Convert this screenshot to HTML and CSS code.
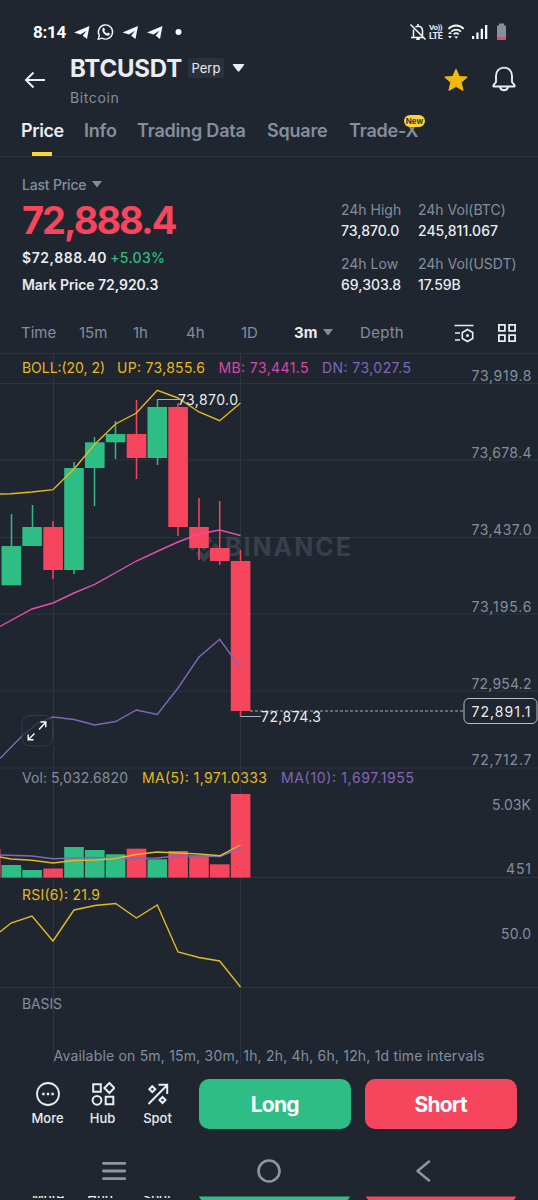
FILE: index.html
```html
<!DOCTYPE html>
<html lang="en">

<head>
    <meta charset="UTF-8">
    <meta name="viewport" content="width=device-width, initial-scale=1.0">
    <title>BTCUSDT Perp</title>
    <link rel="stylesheet" href="styles.css">
</head>

<body>
    <div class="status-bar">
        <span class="clock">8:14</span>
        <svg class="status-left" width="112" height="18" viewBox="0 0 112 18" fill="#f4f6f8">
            <path id="plane" d="M1 9.6 16.5 3 14 16l-4.3-3.2 3.8-5-6 3.7z" />
            <path d="M25.3 16.3 26.3 12.5A7.1 7.1 0 1 1 29 15.2Z" fill="none" stroke="#f4f6f8" stroke-width="1.4" />
            <path d="M29.5 5.4c.8-.9 1.6-.7 2 .2l.5 1.3-.8 1.2c.7 1.3 1.7 2 2.8 2.5l1-1 1.9 1c.4.8-.7 2.1-2 2.1-2.9-.4-6.3-3.6-5.4-7.3z" />
            <use href="#plane" x="48.5" />
            <use href="#plane" x="73" />
            <circle cx="105.500" cy="9" r="3" />
        </svg>
        <div class="status-right">
            <svg width="18" height="18" viewBox="0 0 18 18" fill="none" stroke="#f4f6f8" stroke-width="1.5">
                <path d="M2 14.5h13M4.500 14V6.500M13.500 12.500V8c0-3-1.800-4.800-4.500-4.800-1 0-1.800.2-2.500.7M9 1v2M1.500 1.500l15 15" />
                <path d="M7.300 16h3.400" stroke-width="2" />
            </svg>
            <div class="volte"><span class="vo">Vo))</span><span>LTE</span></div>
            <svg width="18" height="18" viewBox="0 0 18 18" fill="none" stroke="#f4f6f8" stroke-width="1.8">
                <path d="M1.500 5.800c4.300-4.400 10.900-4.400 15.200 0M4.300 8.700c2.800-2.700 7-2.700 9.700 0M6.700 11.300c1.500-1.400 3.500-1.400 5 0" />
                <path d="m9.200 15.800 2-2.300H7.200z" fill="#f4f6f8" stroke="none" />
                <path d="M3 8.500 1 11h4zM3 15.500 1 13h4z" fill="#f4f6f8" stroke="none" />
            </svg>
            <svg class="signal" width="16" height="18" viewBox="0 0 16 18" fill="#f4f6f8">
                <path d="M0 13h2.200v3H0zM4.300 9.500h2.300V16H4.300zM8.700 5.800H11V16H8.700zM13 2h2.300v14H13z" />
            </svg>
            <svg class="battery" width="9" height="18" viewBox="0 0 9 18">
                <path d="M2 .5h5V2l2 1v13q0 1-1 1H1q-1 0-1-1V3l2-1z" fill="#8a8f98" />
                <path d="M0 14h9v2q0 1-1 1H1q-1 0-1-1z" fill="#f6465d" />
            </svg>
        </div>
    </div>

    <header class="header">
        <svg class="back" width="22" height="20" viewBox="0 0 22 20" fill="none" stroke="#eaecef" stroke-width="2">
            <path d="M21 10H2M9.500 2.500 2 10l7.500 7.500" />
        </svg>
        <div class="pair">
            <div class="pair-name">
                <h1>BTCUSDT</h1>
                <span class="perp">Perp</span>
                <svg width="13" height="8" viewBox="0 0 13 8" fill="#eaecef"><path d="M1.500 0h10q1.200 0 .6 1L7.300 7.300q-.8.800-1.600 0L.9 1Q.3 0 1.500 0z" /></svg>
            </div>
            <div class="coin">Bitcoin</div>
        </div>
        <svg class="star" width="24" height="24" viewBox="0 0 24 24" fill="#f0b90b" stroke="#f0b90b" stroke-width="1.2" stroke-linejoin="round">
            <path d="m12 1.500 3.100 7 7.900.6-6 5.100 1.900 8L12 18.300l-6.900 3.900L7 14.200 1 9.100l7.900-.6z" />
        </svg>
        <svg class="bell" width="24" height="26" viewBox="0 0 24 26" fill="none" stroke="#eaecef" stroke-width="1.9">
            <path d="M1.500 20.500v-1.300L4 16V10c0-5 3.400-8.400 8-8.400S20 5 20 10v6l2.500 3.200v1.300z" stroke-linejoin="round" />
            <path d="M8 21c.4 2 2 3.200 4 3.200s3.600-1.200 4-3.200" />
        </svg>
    </header>

    <nav class="tabs">
        <a class="tab active">Price</a>
        <a class="tab info">Info</a>
        <a class="tab data">Trading Data</a>
        <a class="tab square">Square</a>
        <a class="tab tradex">Trade-X<span class="new">New</span></a>
    </nav>

    <section class="ticker">
        <div class="ticker-left">
            <div class="last-label">Last Price
                <svg width="10" height="7" viewBox="0 0 10 7" fill="#848e9c"><path d="M0 0h10L5 6.500z" /></svg>
            </div>
            <div class="last-price">72,888.4</div>
            <div class="usd">$72,888.40 <span class="change">+5.03%</span></div>
            <div class="mark">Mark Price <span>72,920.3</span></div>
        </div>
        <div class="stats">
            <div class="stat"><span class="k">24h High</span><span class="v">73,870.0</span></div>
            <div class="stat"><span class="k">24h Vol(BTC)</span><span class="v">245,811.067</span></div>
            <div class="stat"><span class="k">24h Low</span><span class="v">69,303.8</span></div>
            <div class="stat"><span class="k">24h Vol(USDT)</span><span class="v">17.59B</span></div>
        </div>
    </section>

    <div class="intervals">
        <span class="time">Time</span>
        <span class="m15">15m</span>
        <span class="h1">1h</span>
        <span class="h4">4h</span>
        <span class="d1">1D</span>
        <span class="m3">3m</span>
        <svg class="caret" width="10" height="7" viewBox="0 0 10 7" fill="#848e9c"><path d="M0 0h10L5 6.500z" /></svg>
        <span class="depth">Depth</span>
        <svg class="settings" width="20" height="20" viewBox="0 0 20 20" fill="none" stroke="#eaecef" stroke-width="1.6">
            <path d="M.5 2.500h19M1 10h5M1 17h5M13.500 6.500l5.200 3v6l-5.200 3-5.200-3v-6z" />
            <circle cx="13.500" cy="12.500" r="1.500" fill="#eaecef" stroke="none" />
        </svg>
        <svg class="layout" width="20" height="20" viewBox="0 0 20 20" fill="none" stroke="#eaecef" stroke-width="1.8">
            <path d="M1.900 1.900h6v6h-6zM12.100 1.900h6v6h-6zM1.900 12.100h6v6h-6zM12.100 12.100h6v6h-6z" />
        </svg>
    </div>

    <svg class="chart" width="538" height="711" viewBox="0 353 538 711">
        <g class="grid">
            <path d="M0 353.500H538M0 383.500H538M0 460H538M0 537.500H538M0 614H538M0 691H538M0 768H538M0 877.500H538M0 987.500H538" />
            <path d="M53.500 353V1064M240.500 353V1064" />
        </g>

        <!-- watermark -->
        <g class="watermark">
            <path d="m204 532 8.500 8.500-3.800 3.800-4.700-4.700-4.700 4.700-3.800-3.800zM192.500 543l4 4-4 4-4-4zM204 543l4 4-4 4-4-4zM215.500 543l4 4-4 4-4-4zM204 562l-8.500-8.500 3.800-3.800 4.700 4.700 4.700-4.700 3.800 3.800z" />
            <text x="225" y="556" textLength="126">BINANCE</text>
        </g>

        <!-- candles -->
        <g class="up">
            <path d="M11.500 514V550M32.500 505V530M74 462V574M94.500 437V506M115.500 421V459M157.500 399V465" />
            <rect x="1.500" y="546" width="19.6" height="39.3" />
            <rect x="22.300" y="527" width="19.6" height="19" />
            <rect x="64.200" y="468" width="19.6" height="102" />
            <rect x="85" y="442.300" width="19.6" height="25.7" />
            <rect x="105.800" y="434" width="19.6" height="8.3" />
            <rect x="147.500" y="407" width="19.6" height="51" />
        </g>
        <g class="down">
            <path d="M53 521V579M136.500 400V479M178 403V536M199 498V560M219.700 501V565M240.500 550V716" />
            <rect x="43.300" y="527" width="19.6" height="43" />
            <rect x="126.700" y="434" width="19.6" height="24" />
            <rect x="168.300" y="407" width="19.6" height="120" />
            <rect x="189.200" y="527" width="19.6" height="21" />
            <rect x="210" y="548" width="19.6" height="13" />
            <rect x="230.800" y="561" width="19.6" height="150" />
        </g>

        <!-- bollinger bands -->
        <polyline class="line yellow" points="0,494 11,493.7 32,492 53,489.7 74,469 95,444 115.6,424 136.4,413 157.3,390.3 178,398 199,412 219.7,420.7 240.5,403" />
        <polyline class="line pink" points="0,626.5 32,609 53,603 74,593 94.7,584.3 136.4,561 157,551.5 178,542 199,534 219.7,530 240.5,535.5" />
        <polyline class="line purple" points="0,758.5 22,736 38,723 53,717 74,719.5 94.7,725 115.6,721.5 136.4,710 157.3,714.5 178,688 199,657 219.7,639.3 240.5,668" />

        <path class="pointer" d="M157.500 399.500H179M240.500 716.500H261" />
        <path class="dash" d="M250 711H464" />
        <text class="mark-text" x="178" y="405" textLength="60">73,870.0</text>
        <text class="mark-text" x="261" y="722" textLength="60">72,874.3</text>

        <g class="legend">
            <text class="c-yellow" x="22" y="372.500" textLength="83">BOLL:(20, 2)</text>
            <text class="c-yellow" x="117" y="372.500" textLength="88">UP: 73,855.6</text>
            <text class="c-pink" x="218.500" y="372.500" textLength="90">MB: 73,441.5</text>
            <text class="c-purple" x="322" y="372.500" textLength="89">DN: 73,027.5</text>
            <text x="22" y="783" textLength="106">Vol: 5,032.6820</text>
            <text class="c-yellow" x="142" y="783" textLength="125">MA(5): 1,971.0333</text>
            <text class="c-purple" x="281" y="783" textLength="133">MA(10): 1,697.1955</text>
            <text class="c-yellow" x="22" y="900" textLength="78">RSI(6): 21.9</text>
            <text x="22" y="1009" textLength="40">BASIS</text>
            <text x="53.500" y="1061" textLength="431">Available on 5m, 15m, 30m, 1h, 2h, 4h, 6h, 12h, 1d time intervals</text>
        </g>

        <g class="axis">
            <text x="471.500" y="380.500" textLength="60">73,919.8</text>
            <text x="471.500" y="457.500" textLength="60">73,678.4</text>
            <text x="471.500" y="534.500" textLength="60">73,437.0</text>
            <text x="471.500" y="611.500" textLength="60">73,195.6</text>
            <text x="471.500" y="688.500" textLength="60">72,954.2</text>
            <text x="471.500" y="764.500" textLength="60">72,712.7</text>
            <text x="492" y="809.500" textLength="39">5.03K</text>
            <text x="506" y="873.500" textLength="25">451</text>
            <text x="501" y="939" textLength="30">50.0</text>
        </g>

        <!-- current price -->
        <rect class="price-tag" x="464" y="698.500" width="73" height="25" rx="5" />
        <text class="mark-text" x="471.500" y="717" textLength="59">72,891.1</text>

        <!-- fullscreen button -->
        <rect class="expand" x="22" y="715.500" width="30.5" height="30.5" rx="8" />
        <path class="arrows" d="M39 729.500l6.500-7M40.500 722h5.300v5.300M34.500 733.500l-6 6M33.500 739.800h-5.300v-5.300" />

        <!-- volume -->
        <g class="up">
            <rect x="1.500" y="865" width="19.6" height="12.6" />
            <rect x="22.300" y="870" width="19.6" height="7.6" />
            <rect x="64.200" y="847" width="19.6" height="30.6" />
            <rect x="85" y="850" width="19.6" height="27.6" />
            <rect x="105.800" y="854.300" width="19.6" height="23.3" />
            <rect x="147.500" y="859.300" width="19.6" height="18.3" />
        </g>
        <g class="down">
            <rect x="0" y="849" width=".5" height="28.6" />
            <rect x="43.300" y="868.500" width="19.6" height="9.1" />
            <rect x="126.700" y="848.700" width="19.6" height="28.9" />
            <rect x="168.300" y="851" width="19.6" height="26.6" />
            <rect x="189.200" y="855.300" width="19.6" height="22.3" />
            <rect x="210" y="864.300" width="19.6" height="13.3" />
            <rect x="230.800" y="794" width="19.6" height="83.6" />
        </g>
        <polyline class="line purple" points="0,855 32,856 53,858.7 74,858 95,857.5 116,858.5 157,858 178,856 199,856 220,856.5 240.5,848" />
        <polyline class="line yellow" points="0,857 11,859 32,860.2 53,863 74,860.5 95,860 116,858.5 136,854.5 157,852 178,853 199,854 220,855.7 240.5,845" />

        <!-- rsi -->
        <polyline class="line yellow" points="0,932 11,923 32,916 53,941 74,910 95,905.5 115.6,903.5 136.4,918 157.3,905 178,952 199,957.5 219.7,961 240.5,987" />
    </svg>

    <div class="actions">
        <div class="action more">
            <svg width="24" height="24" viewBox="0 0 24 24" fill="none" stroke="#eaecef" stroke-width="1.8">
                <circle cx="12" cy="12" r="11" />
                <path d="M6.200 12h2.400M10.800 12h2.400M15.400 12h2.400" stroke-width="2.4" />
            </svg>
            <span>More</span>
        </div>
        <div class="action hub">
            <svg width="24" height="24" viewBox="0 0 24 24" fill="none" stroke="#eaecef" stroke-width="2">
                <path d="M2.200 2.200h7.600v7.600H2.200zM14.700 14.700h7.600v7.600h-7.600zM18.400 1l5 5-5 5-5-5z" />
                <circle cx="6" cy="18.300" r="4.400" />
            </svg>
            <span>Hub</span>
        </div>
        <div class="action spot">
            <svg width="24" height="24" viewBox="0 0 24 24" fill="none" stroke="#eaecef" stroke-width="2">
                <path d="M2.500 22 21 3.300M12.500 2.800h8.700V12M6.300 4.200l3 3-3 3-3-3zM16.500 15l3 3-3 3-3-3z" />
            </svg>
            <span>Spot</span>
        </div>
        <button class="btn long">Long</button>
        <button class="btn short">Short</button>
    </div>

    <div class="system-nav">
        <svg width="26" height="20" viewBox="0 0 26 20" fill="none" stroke="#8f949d" stroke-width="2.8" stroke-linecap="round"><path d="M2.400 2.300h21.400M2.400 10h21.400M2.400 17.700h21.400" /></svg>
        <svg class="home" width="24" height="24" viewBox="0 0 24 24" fill="none" stroke="#8f949d" stroke-width="2.6"><circle cx="12" cy="12" r="10.500" /></svg>
        <svg width="16" height="22" viewBox="0 0 16 22" fill="none" stroke="#8f949d" stroke-width="2.5" stroke-linecap="round" stroke-linejoin="round"><path d="M14 1.500 2.500 11 14 20.500" /></svg>
    </div>

    <!-- top edge of the next action row -->
    <div class="peek">
        <div class="peek-labels"><span>More</span><span>Hub</span><span>Spot</span></div>
        <svg width="320" height="4" viewBox="0 0 320 4">
            <path d="M1 .5h151q-.5 2-2.500 3.500H3.500Q1.500 2.500 1 .5z" fill="#2ebd85" />
            <path d="M168 .5h150q-.5 2-2.500 3.500H170.500q-2-1.500-2.500-3.500z" fill="#f6465d" />
        </svg>
    </div>
</body>

</html>
```

FILE: styles.css
```css
* {
    box-sizing: border-box;
}

body {
    margin: 0;
    width: 538px;
    height: 1200px;
    overflow: hidden;
    background-color: #202630;
    color: #eaecef;
    font-family: Inter, "Liberation Sans", sans-serif;
    font-size: 14px;
}

svg {
    display: block;
    flex-shrink: 0;
}

.status-bar {
    display: flex;
    align-items: center;
    height: 48px;
    padding: 16px 32px 0 33px;
}

.clock {
    width: 33px;
    font-family: Roboto, sans-serif;
    font-size: 17px;
    font-weight: 700;
    letter-spacing: -0.3px;
    color: #fff;
}

.status-left {
    margin-left: 7px;
}

.status-right {
    display: flex;
    align-items: center;
    margin-left: auto;
}

.volte {
    display: flex;
    flex-direction: column;
    width: 15px;
    margin: 0 3px 0 2px;
    font-family: Roboto, sans-serif;
    font-size: 9px;
    line-height: 8px;
    font-weight: 700;
    letter-spacing: -0.4px;
    white-space: nowrap;
}

.vo {
    font-size: 8px;
    letter-spacing: -0.5px;
}

.signal {
    margin-left: 7px;
}

.battery {
    margin-left: 9px;
}

.header {
    display: flex;
    height: 64px;
    padding-left: 24px;
}

.back {
    margin-top: 22px;
}

.pair {
    width: 374px;
    margin-left: 24px;
}

.pair-name {
    display: flex;
    align-items: center;
    height: 40px;
}

h1 {
    width: 112px;
    margin: 0;
    font-size: 24px;
    font-weight: 700;
    letter-spacing: -0.2px;
}

.perp {
    width: 36px;
    height: 20px;
    margin: 0 8px 0 6px;
    border-radius: 3px;
    background: #29313d;
    font-size: 13px;
    line-height: 20px;
    text-align: center;
}

.coin {
    margin-top: 1px;
    color: #848e9c;
    line-height: 17px;
    letter-spacing: 0.6px;
}

.star {
    margin-top: 20px;
}

.bell {
    margin: 18px 0 0 24px;
}

.tabs {
    display: flex;
    height: 45px;
    padding-left: 21px;
    border-bottom: 1px solid #2b323d;
    font-size: 18px;
    font-weight: 600;
    letter-spacing: -0.2px;
    color: #848e9c;
}

.tab {
    position: relative;
    line-height: 38px;
    white-space: nowrap;
}

.active {
    width: 63px;
    color: #eaecef;
    letter-spacing: -0.4px;
}

.active::after {
    content: "";
    position: absolute;
    left: 11px;
    bottom: 0;
    width: 20px;
    height: 4px;
    background: #fcd535;
}

.info {
    width: 53px;
}

.data {
    width: 130px;
}

.square {
    width: 82px;
}

.new {
    position: absolute;
    left: 55px;
    top: 3px;
    width: 21px;
    height: 12px;
    border-radius: 6px;
    background: #fcd535;
    color: #202630;
    font-size: 8px;
    line-height: 12px;
    letter-spacing: 0;
    text-align: center;
}

.ticker {
    display: flex;
    height: 155px;
    padding-left: 22px;
}

.ticker-left {
    width: 319px;
    padding-top: 18px;
}

.last-label {
    display: flex;
    align-items: center;
    gap: 6px;
    height: 18px;
    color: #848e9c;
    font-weight: 500;
    letter-spacing: -0.2px;
}

.last-price {
    height: 55px;
    color: #f6465d;
    font-size: 38px;
    line-height: 54px;
    font-weight: 700;
    letter-spacing: -2px;
}

.usd,
.mark {
    height: 27px;
    line-height: 20px;
    font-weight: 600;
}

.usd {
    letter-spacing: 0.55px;
    word-spacing: -1px;
}

.mark {
    letter-spacing: -0.05px;
}

.change {
    color: #2ebd85;
    font-weight: 500;
    letter-spacing: 0.3px;
}

.stats {
    display: grid;
    grid-template-columns: 77px 110px;
    grid-auto-rows: 54px;
    padding-top: 42px;
}

.stat {
    display: flex;
    flex-direction: column;
    line-height: 21px;
    white-space: nowrap;
}

.k {
    color: #848e9c;
}

.v {
    font-weight: 500;
}

.intervals {
    display: flex;
    align-items: center;
    height: 41px;
    padding-left: 21px;
    color: #848e9c;
    font-size: 15px;
}

.time {
    width: 58px;
}

.m15 {
    width: 54px;
}

.h1 {
    width: 53px;
}

.h4 {
    width: 55px;
}

.d1 {
    width: 53px;
}

.m3 {
    width: 29px;
    color: #eaecef;
    font-weight: 700;
}

.depth {
    width: 67px;
    margin-left: 27px;
    letter-spacing: 0.3px;
}

.settings {
    margin-left: 27px;
}

.layout {
    margin-left: 23px;
}

.chart {
    font-size: 14px;
}

.grid {
    fill: none;
    stroke: #2d343f;
}

.up {
    fill: #2ebd85;
}

.down {
    fill: #f6465d;
}

.up path {
    stroke: #2ebd85;
    stroke-width: 1.5;
}

.down path {
    stroke: #f6465d;
    stroke-width: 1.5;
}

.watermark {
    fill: #848e9c;
    opacity: 0.24;
    font-size: 25px;
    font-weight: 700;
}

.line {
    fill: none;
    stroke-width: 1.4;
}

.yellow {
    stroke: #e6b91e;
}

.pink {
    stroke: #e44fb0;
}

.purple {
    stroke: #8266b8;
}

.pointer {
    stroke: #aab0b9;
}

.dash {
    stroke: #aab0b9;
    stroke-dasharray: 3 2;
}

.mark-text {
    fill: #eaecef;
}

.legend,
.axis {
    fill: #848e9c;
}

.c-yellow {
    fill: #e6b91e;
}

.c-pink {
    fill: #d848a8;
}

.c-purple {
    fill: #8266b8;
}

.price-tag {
    fill: #202630;
    stroke: #b7bdc6;
}

.expand {
    fill: #202630;
    fill-opacity: 0.7;
    stroke: #353c47;
}

.arrows {
    fill: none;
    stroke: #fff;
    stroke-width: 1.4;
}

.actions {
    display: flex;
    height: 79px;
    padding: 15px 20px 0 20px;
}

.action {
    display: flex;
    flex-direction: column;
    align-items: center;
    width: 55px;
    padding-top: 3px;
    font-size: 13px;
    font-weight: 500;
}

.action span {
    margin-top: 4px;
}

.btn {
    width: 152.5px;
    height: 50px;
    margin: 0 0 0 13.5px;
    border: none;
    border-radius: 10px;
    color: #fff;
    font-family: inherit;
    font-size: 21px;
    font-weight: 700;
    letter-spacing: -0.8px;
}

.long {
    background: #2ebd85;
}

.short {
    background: #f6465d;
}

.system-nav {
    display: flex;
    align-items: center;
    justify-content: space-between;
    height: 53px;
    padding: 3px 107px 0 101px;
}

.home {
    margin-right: 4px;
}

.peek {
    display: flex;
    height: 4px;
    overflow: hidden;
}

.peek-labels {
    display: flex;
    width: 198px;
    height: 2px;
    padding-left: 32px;
    overflow: hidden;
    font-size: 13px;
    line-height: 2px;
    font-weight: 500;
}

.peek-labels span {
    width: 57px;
}
```
